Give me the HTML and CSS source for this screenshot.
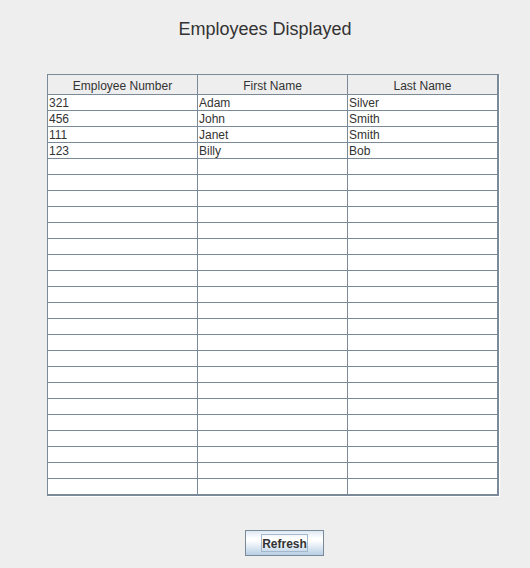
FILE: index.html
```html
<!DOCTYPE html>
<html>
<head>
<meta charset="utf-8">
<link rel="stylesheet" href="styles.css">
</head>
<body>
<div class="window">
  <h1 class="title">Employees Displayed</h1>
  <div class="pane">
    <table class="grid">
      <thead>
        <tr><th>Employee Number</th><th>First Name</th><th>Last Name</th></tr>
      </thead>
      <tbody>
        <tr><td>321</td><td>Adam</td><td>Silver</td></tr>
        <tr><td>456</td><td>John</td><td>Smith</td></tr>
        <tr><td>111</td><td>Janet</td><td>Smith</td></tr>
        <tr><td>123</td><td>Billy</td><td>Bob</td></tr>
        <tr><td></td><td></td><td></td></tr>
        <tr><td></td><td></td><td></td></tr>
        <tr><td></td><td></td><td></td></tr>
        <tr><td></td><td></td><td></td></tr>
        <tr><td></td><td></td><td></td></tr>
        <tr><td></td><td></td><td></td></tr>
        <tr><td></td><td></td><td></td></tr>
        <tr><td></td><td></td><td></td></tr>
        <tr><td></td><td></td><td></td></tr>
        <tr><td></td><td></td><td></td></tr>
        <tr><td></td><td></td><td></td></tr>
        <tr><td></td><td></td><td></td></tr>
        <tr><td></td><td></td><td></td></tr>
        <tr><td></td><td></td><td></td></tr>
        <tr><td></td><td></td><td></td></tr>
        <tr><td></td><td></td><td></td></tr>
        <tr><td></td><td></td><td></td></tr>
        <tr><td></td><td></td><td></td></tr>
        <tr><td></td><td></td><td></td></tr>
        <tr><td></td><td></td><td></td></tr>
        <tr><td></td><td></td><td></td></tr>
      </tbody>
    </table>
  </div>
  <button class="btn"><span class="btn-focus">Refresh</span></button>
</div>
</body>
</html>
```

FILE: styles.css
```css
html, body {
  margin: 0;
  padding: 0;
  background: #eeeeee;
}
body {
  width: 530px;
  height: 568px;
  overflow: hidden;
  font-family: "Liberation Sans", Arial, sans-serif;
  color: #333333;
}
.window {
  display: flex;
  flex-direction: column;
  align-items: flex-start;
}
.title {
  align-self: center;
  margin: 19px 0 0 0;
  font-size: 18px;
  line-height: 21px;
  font-weight: normal;
  color: #333333;
}
.pane {
  margin: 34px 0 0 47px;
  border: 1px solid #7a8a99;
  box-shadow: 1px 1px 0 #ffffff;
  background: #ffffff;
}
.grid {
  border-collapse: separate;
  border-spacing: 0;
  table-layout: fixed;
  width: 450px;
  font-size: 12px;
}
.grid th,
.grid td {
  width: 149px;
  padding: 0;
  border-right: 1px solid #7a8a99;
  border-bottom: 1px solid #7a8a99;
  overflow: hidden;
  white-space: nowrap;
}
.grid th {
  box-sizing: border-box;
  height: 20px;
  padding-top: 3px;
  line-height: 16px;
  vertical-align: top;
  background: #eeeeee;
  font-weight: normal;
  text-align: center;
  color: #333333;
}
.grid td {
  box-sizing: border-box;
  height: 16px;
  padding-top: 1px;
  padding-left: 1px;
  line-height: 14px;
  vertical-align: top;
  text-align: left;
  color: #333333;
  background: #ffffff;
}
.btn {
  margin: 34px 0 0 245px;
  width: 79px;
  height: 26px;
  padding: 0;
  border: 1px solid #7a8a99;
  border-radius: 0;
  background: linear-gradient(to bottom, #dde8f3 0%, #ffffff 30%, #ffffff 40%, #b8cfe5 100%);
  display: flex;
  align-items: center;
  justify-content: center;
  font-family: "Liberation Sans", Arial, sans-serif;
  font-size: 12px;
  font-weight: bold;
  color: #333333;
}
.btn-focus {
  display: block;
  box-sizing: border-box;
  width: 47px;
  height: 18px;
  padding-top: 2px;
  line-height: 14px;
  border: 1px solid #a3b8cc;
  text-align: center;
}
```
